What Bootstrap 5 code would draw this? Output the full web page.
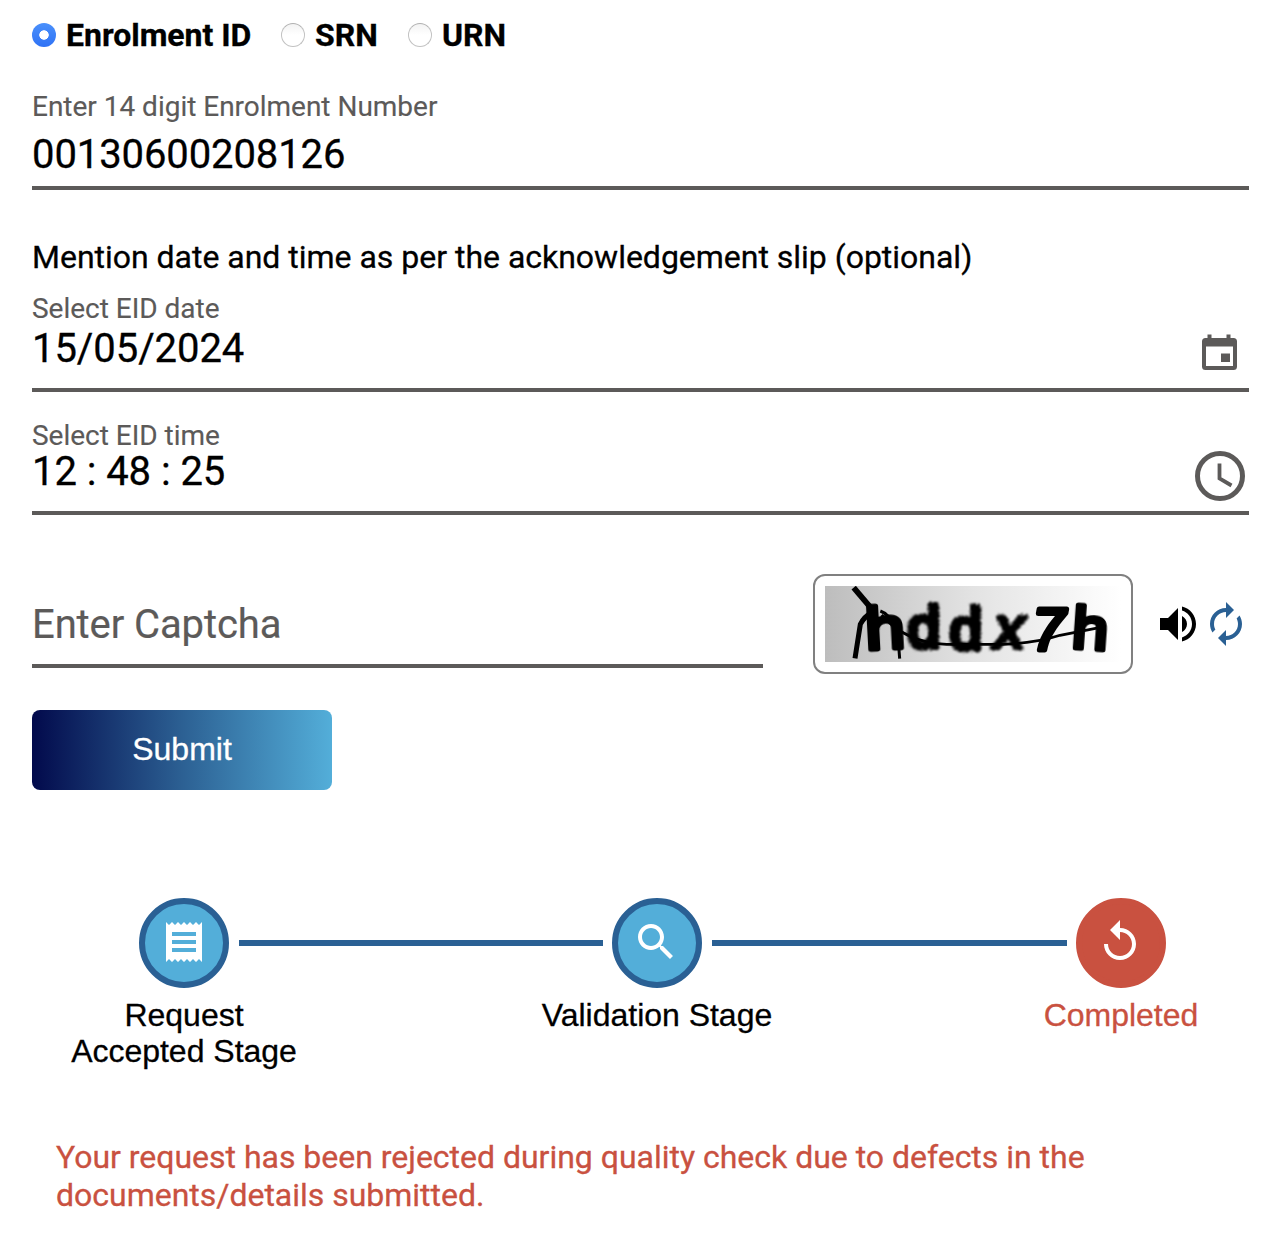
<!DOCTYPE html>
<html lang="en">
<head>
<meta charset="utf-8">
<meta name="viewport" content="width=device-width, initial-scale=1">
<title>Enrolment status</title>
<link href="https://cdn.jsdelivr.net/npm/bootstrap@5.3.0/dist/css/bootstrap.min.css" rel="stylesheet">
<style>
body{font-family:Roboto,"Liberation Sans",sans-serif;color:#000;background:#fff;font-size:32px;line-height:38px;letter-spacing:-.015px;-webkit-text-stroke:.3px}
.page{width:1282px;height:1250px;padding:16px 33px 0 32px;overflow:hidden}
.id-types{height:38px;font-weight:700}
.id-types input{appearance:none;width:24px;height:24px;margin:0 10px 0 0;border:1px solid #c2c2c2;border-top-color:#b0b0b0;border-radius:50%;background:linear-gradient(#f3f3f3,#fff 50%)}
.id-types input:checked{border:0;background:radial-gradient(circle,#fff 4.4px,transparent 5px),linear-gradient(#4a90fb,#2f72f5)}
.opt-eid{width:249px}.opt-srn{width:127px}
.line-field{border-bottom:4px solid #5c5a59}
.line-field label{display:block;font-size:28px;line-height:30px;padding-top:3px;color:#5c5a59;-webkit-text-stroke:.15px}
.entry{font-size:40px;line-height:42px;letter-spacing:-.06px}
.f-number{height:101px;margin-top:35px}
.f-number .entry{margin-top:12px;letter-spacing:-.1px}
.hint{margin-top:48px}
.f-date{height:101px;margin-top:15px}
.f-time{height:97px;margin-top:26px}
.f-date .entry{margin-top:4px}
.f-date svg{margin:10px 11px 0 0}
.f-time svg{margin:0 4px 0 0}
.captcha-row{height:100px;margin-top:59px}
.captcha-input{width:731px;height:94px;border-bottom:4px solid #5c5a59;color:#5c5a59;font-size:40px;line-height:46px;padding-top:28px;letter-spacing:-.1px;-webkit-text-stroke:.2px}
.captcha-box{width:320px;height:100px;margin-left:50px;border:2px solid #808080;border-radius:12px;padding:10px}
.captcha-box svg{display:block;-webkit-text-stroke:0}
.audio{margin-left:21px}
.submit-btn{width:300px;height:80px;margin-top:36px;border:0;border-radius:8px;background:linear-gradient(to right,#020a4c,#2c6093 50%,#53aed9);color:#fff;font-family:"Liberation Sans",sans-serif;font-size:32px;line-height:38px;padding:0 0 2px}
.steps{margin:108px 83px 0 107px}
.dot{width:90px;height:90px;flex:none;border:6px solid #2a6094;border-radius:50%;background:#53aed9;padding-bottom:2px}
.dot.shift{padding-right:2px}
.dot.rejected{border-color:#c95140;background:#c95140}
.bar{height:6px;background:#2a6094;margin:0 9px 0 10px}
.step-names{font-family:"Liberation Sans",sans-serif;line-height:36px;text-align:center;margin-left:32px;padding-top:9px;height:115px}
.step-names div{width:240px}
.step-names .s2{margin:0 224px 0 233px}
.red-text{color:#c95140}
.result{margin:35px 0 0 24px;width:1060px}
</style>
</head>
<body>
<main class="page">
  <div class="id-types d-flex">
    <label class="opt-eid d-flex align-items-center"><input type="radio" name="t" checked><span>Enrolment ID</span></label>
    <label class="opt-srn d-flex align-items-center"><input type="radio" name="t"><span>SRN</span></label>
    <label class="d-flex align-items-center"><input type="radio" name="t"><span>URN</span></label>
  </div>

  <div class="line-field f-number">
    <label>Enter 14 digit Enrolment Number</label>
    <div class="entry">00130600208126</div>
  </div>

  <div class="hint">Mention date and time as per the acknowledgement slip (optional)</div>

  <div class="line-field f-date">
    <label>Select EID date</label>
    <div class="d-flex justify-content-between align-items-start">
      <div class="entry">15/05/2024</div>
      <svg width="37" height="37" viewBox="0 0 37 37" fill="#5c5a59"><path fill-rule="evenodd" d="M6.500.5h4V4h15V.5h4V4h3a3.500 3.500 0 0 1 3.500 3.500v25a3.500 3.500 0 0 1-3.500 3.500h-28A3.500 3.500 0 0 1 1 32.500v-25A3.500 3.500 0 0 1 4.500 4h2zM5 12.500V32h27V12.500z"/><path d="M20 19.500h9V28h-9z"/></svg>
    </div>
  </div>

  <div class="line-field f-time">
    <label>Select EID time</label>
    <div class="d-flex justify-content-between align-items-start">
      <div class="entry">12 : 48 : 25</div>
      <svg width="50" height="50" viewBox="0 0 50 50" fill="none" stroke="#5c5a59"><circle cx="25" cy="25" r="22.500" stroke-width="5"/><path d="M24.500 12.500v15l12 7" stroke-width="3.800"/></svg>
    </div>
  </div>

  <div class="captcha-row d-flex align-items-start">
    <div class="captcha-input flex-shrink-0">Enter Captcha</div>
    <div class="captcha-box flex-shrink-0">
      <svg width="296" height="76" viewBox="60 63 888 228">
        <defs>
          <linearGradient id="fade"><stop offset="0" stop-color="#bdbdbd"/><stop offset=".5" stop-color="#e3e3e3"/><stop offset="1" stop-color="#fff"/></linearGradient>
          <filter id="soft"><feGaussianBlur stdDeviation="2"/></filter>
          <filter id="rough" x="-10%" y="-10%" width="120%" height="120%"><feTurbulence type="fractalNoise" baseFrequency=".2" numOctaves="2"/><feDisplacementMap in="SourceGraphic" scale="16" xChannelSelector="R" yChannelSelector="G"/><feGaussianBlur stdDeviation="3"/></filter>
        </defs>
        <rect x="60" y="63" width="888" height="228" fill="url(#fade)"/>
        <g fill="none" stroke="#050505" filter="url(#soft)">
          <path d="M146 68l58 68" stroke-width="17"/>
          <path d="M206 138q-30 18-40 40l-16 102" stroke-width="15"/>
          <path d="M226 138q52 18 58 143" stroke-width="9"/>
          <path d="M230 150q75 85 195 88h170q100-4 170-27l118-23" stroke-width="8"/>
        </g>
        <g font-family="Liberation Sans" fill="#050505" stroke="#050505" stroke-width="15" stroke-linejoin="round" letter-spacing="0">
          <text font-size="180" filter="url(#soft)" transform="translate(184 254) rotate(-3) scale(1.180 1)">h</text>
          <text font-size="174" filter="url(#rough)" x="308 434" y="246 252" stroke-width="18">dd</text>
          <text font-size="180" font-style="italic" filter="url(#rough)" x="568" y="248">x</text>
          <text font-size="176" font-style="italic" filter="url(#soft)" x="682" y="256">7</text>
          <text font-size="180" filter="url(#soft)" transform="translate(798 248) rotate(4) scale(1.080 1)">h</text>
        </g>
      </svg>
    </div>
    <div class="audio d-flex flex-shrink-0 align-self-center">
      <svg width="48" height="48" viewBox="0 0 24 24"><path d="M3 9v6h4l5 5V4L7 9H3zm13.500 3c0-1.770-1.020-3.290-2.500-4.030v8.050c1.480-.73 2.500-2.250 2.500-4.020zM14 3.230v2.060c2.890.86 5 3.540 5 6.710s-2.110 5.850-5 6.710v2.060c4.010-.91 7-4.490 7-8.770s-2.990-7.860-7-8.770z"/></svg>
      <svg width="48" height="48" viewBox="0 0 24 24" fill="#2a6094"><path d="M12 6v3l4-4-4-4v3c-4.420 0-8 3.580-8 8 0 1.570.46 3.030 1.240 4.260L6.700 14.800c-.45-.83-.7-1.790-.7-2.800 0-3.310 2.690-6 6-6zm6.760 1.740L17.300 9.200c.44.84.7 1.790.7 2.800 0 3.310-2.690 6-6 6v-3l-4 4 4 4v-3c4.420 0 8-3.580 8-8 0-1.570-.46-3.030-1.240-4.260z"/></svg>
    </div>
  </div>

  <button class="submit-btn d-block" type="button">Submit</button>

  <div class="steps d-flex align-items-center">
    <div class="dot d-flex align-items-center justify-content-center"><svg width="48" height="48" viewBox="0 0 24 24" fill="#fff"><path d="M18 17H6v-2h12v2zm0-4H6v-2h12v2zm0-4H6V7h12v2zM3 22l1.500-1.500L6 22l1.500-1.500L9 22l1.500-1.500L12 22l1.500-1.500L15 22l1.500-1.500L18 22l1.500-1.500L21 22V2l-1.500 1.500L18 2l-1.500 1.500L15 2l-1.500 1.500L12 2l-1.500 1.500L9 2 7.500 3.500 6 2 4.500 3.500 3 2v20z"/></svg></div>
    <div class="bar flex-grow-1" style="flex-basis:364px"></div>
    <div class="dot shift d-flex align-items-center justify-content-center"><svg width="48" height="48" viewBox="0 0 24 24" fill="#fff"><path d="M15.500 14h-.79l-.28-.27C15.410 12.590 16 11.110 16 9.500 16 5.910 13.090 3 9.500 3S3 5.910 3 9.500 5.910 16 9.500 16c1.610 0 3.090-.59 4.230-1.570l.27.28v.79l5 4.990L20.490 19l-4.990-5zm-6 0C7.010 14 5 11.990 5 9.500S7.010 5 9.500 5 14 7.010 14 9.500 11.990 14 9.500 14z"/></svg></div>
    <div class="bar flex-grow-1" style="flex-basis:355px"></div>
    <div class="dot shift rejected d-flex align-items-center justify-content-center"><svg width="48" height="48" viewBox="0 0 24 24" fill="#fff"><path d="M12 5V1L7 6l5 5V7c3.310 0 6 2.690 6 6s-2.690 6-6 6-6-2.690-6-6H4c0 4.420 3.580 8 8 8s8-3.580 8-8-3.580-8-8-8z"/></svg></div>
  </div>
  <div class="step-names d-flex">
    <div>Request<br>Accepted Stage</div>
    <div class="s2">Validation Stage</div>
    <div class="red-text">Completed</div>
  </div>

  <p class="result red-text">Your request has been rejected during quality check due to defects in the<br>documents/details submitted.</p>
</main>
<script src="https://cdn.jsdelivr.net/npm/bootstrap@5.3.0/dist/js/bootstrap.bundle.min.js"></script>
</body>
</html>
